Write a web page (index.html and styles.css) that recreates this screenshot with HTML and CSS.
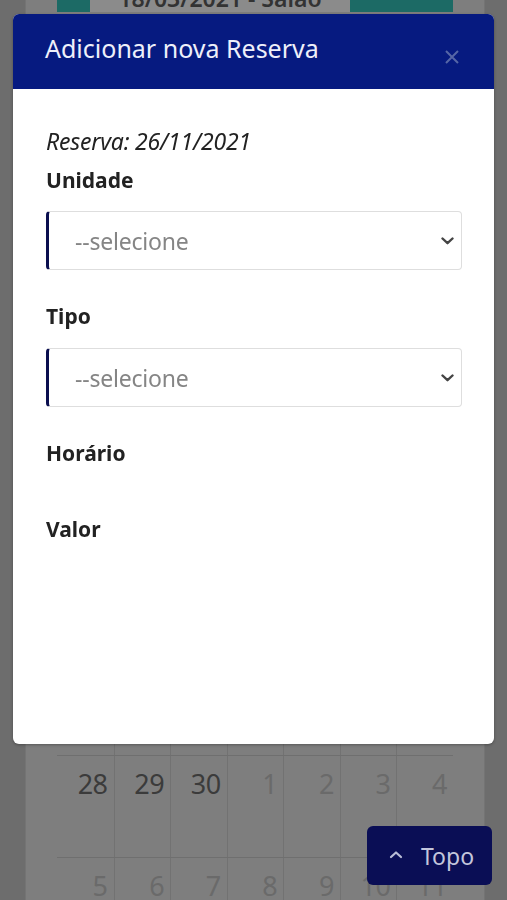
FILE: index.html
```html
<!DOCTYPE html>
<html lang="pt-BR">
<head>
<meta charset="utf-8">
<title>Reservas</title>
<link rel="stylesheet" href="styles.css">
</head>
<body>
<div class="page">
  <div class="cal">
    <div class="events">
      <div class="ev teal"></div>
      <div class="ev label"><span>18/03/2021 - Salão</span></div>
      <div class="ev teal wide"></div>
    </div>
    <div class="weeks">
      <div class="week"><span></span><span></span><span></span><span></span><span></span><span></span><span></span></div>
      <div class="week"><span></span><span></span><span></span><span></span><span></span><span></span><span></span></div>
      <div class="week"><span></span><span></span><span></span><span></span><span></span><span></span><span></span></div>
      <div class="week"><span></span><span></span><span></span><span></span><span></span><span></span><span></span></div>
      <div class="week"><span></span><span></span><span></span><span></span><span></span><span></span><span></span></div>
      <div class="week"><span></span><span></span><span></span><span></span><span></span><span></span><span></span></div>
      <div class="week"><span></span><span></span><span></span><span></span><span></span><span></span><span></span></div>
      <div class="week"><span>28</span><span>29</span><span>30</span><span class="off">1</span><span class="off">2</span><span class="off">3</span><span class="off">4</span></div>
      <div class="week"><span class="off">5</span><span class="off">6</span><span class="off">7</span><span class="off">8</span><span class="off">9</span><span class="off">10</span><span class="off">11</span></div>
    </div>
  </div>
</div>

<div class="modal">
  <div class="modal-head">
    <h2>Adicionar nova Reserva</h2>
    <svg class="close" width="14" height="14" viewBox="0 0 14 14"><path d="M1 1 L13 13 M13 1 L1 13" stroke="#5666a6" stroke-width="2" fill="none"/></svg>
  </div>
  <div class="modal-body">
    <p class="date">Reserva: 26/11/2021</p>
    <div class="group">
      <label>Unidade</label>
      <div class="select"><span>--selecione</span>
        <svg width="13" height="8" viewBox="0 0 13 8"><path d="M1.5 1.5 L6.5 6.2 L11.5 1.5" stroke="#444" stroke-width="2.4" fill="none" stroke-linecap="round" stroke-linejoin="round"/></svg>
      </div>
    </div>
    <div class="group">
      <label>Tipo</label>
      <div class="select"><span>--selecione</span>
        <svg width="13" height="8" viewBox="0 0 13 8"><path d="M1.5 1.5 L6.5 6.2 L11.5 1.5" stroke="#444" stroke-width="2.4" fill="none" stroke-linecap="round" stroke-linejoin="round"/></svg>
      </div>
    </div>
    <div class="group tall">
      <label>Horário</label>
    </div>
    <div class="group">
      <label>Valor</label>
    </div>
  </div>
</div>

<button class="topo">
  <svg width="14" height="9" viewBox="0 0 14 9"><path d="M2 7 L7 2.5 L12 7" stroke="#b9bdd6" stroke-width="2.2" fill="none" stroke-linecap="round" stroke-linejoin="round"/></svg>
  <span>Topo</span>
</button>
</body>
</html>
```
FILE: styles.css
```css
* { box-sizing: border-box; }
html, body { margin: 0; padding: 0; }
body {
  background: #6d6d6d;
  font-family: "Noto Sans", "Open Sans", sans-serif;
  height: 900px;
  overflow: hidden;
}
.page {
  padding: 0 22px 0 25px;
  height: 900px;
}
.cal {
  background: #7e7e7e;
  border-left: 1px solid #747474;
  border-right: 1px solid #747474;
  height: 900px;
  padding: 0 31px 0 31px;
}
.events {
  display: flex;
  height: 12px;
  margin-bottom: 29px;
}
.ev { height: 12px; overflow: hidden; }
.ev.teal { background: #1c6a65; width: 33px; }
.ev.teal.wide { width: 103px; }
.ev.label {
  background: #8b8b8b;
  width: 260px;
  display: flex;
  justify-content: center;
}
.ev.label span {
  display: block;
  margin-top: -14px;
  line-height: 24px;
  font-size: 23px;
  font-weight: 600;
  color: #333;
  white-space: nowrap;
}
.weeks { display: flex; flex-direction: column; }
.week {
  display: grid;
  grid-template-columns: repeat(7, 1fr);
  height: 102px;
  border-top: 1px solid #6f6f6f;
}
.week span {
  border-left: 1px solid #727272;
  text-align: right;
  padding: 10px 6px 0 0;
  font-size: 27px;
  line-height: 36px;
  color: #3b3b3b;
  letter-spacing: -0.5px;
}
.week span:first-child { border-left: none; }
.week span.off { color: #6a6a6a; }

.modal {
  position: fixed;
  left: 13px;
  top: 14px;
  width: 481px;
  height: 730px;
  background: #fff;
  border-radius: 6px;
  overflow: hidden;
  box-shadow: 0 1px 3px rgba(0,0,0,0.3);
}
.modal-head {
  background: #061a80;
  height: 75px;
  display: flex;
  align-items: center;
  justify-content: space-between;
  padding: 0 35px 0 32px;
}
.modal-head h2 {
  margin: 0;
  color: #eef0fa;
  font-weight: 400;
  font-size: 25px;
  letter-spacing: 0;
  margin-top: -8px;
}
.close { margin-top: 10px; }
.modal-body {
  padding: 38px 32px 0 33px;
}
.date {
  margin: 0 0 11px;
  font-style: italic;
  font-size: 23px;
  line-height: 28px;
  color: #222;
  letter-spacing: -0.2px;
}
.group { margin-bottom: 32px; }
.group.tall { margin-bottom: 48px; }
.group label {
  display: block;
  font-weight: 700;
  font-size: 21px;
  line-height: 28px;
  color: #222;
  margin-bottom: 18px;
}
.group:first-of-type label { margin-bottom: 17px; }
.select {
  height: 59px;
  width: 416px;
  border: 1px solid #dedede;
  border-left: 3px solid #0b0f4f;
  border-radius: 4px;
  display: flex;
  align-items: center;
  justify-content: space-between;
  padding: 0 7px 0 26px;
  font-size: 23px;
  color: #858585;
}
.select span { letter-spacing: -0.2px; }

.topo {
  position: fixed;
  right: 15px;
  bottom: 15px;
  width: 125px;
  height: 59px;
  background: #0a0e55;
  border: none;
  border-radius: 6px;
  display: flex;
  align-items: center;
  justify-content: center;
  gap: 18px;
  padding: 0 0 0 4px;
  font-family: "Noto Sans", "Open Sans", sans-serif;
  font-size: 23px;
  color: #c3c6dc;
}
.topo svg { margin-top: -2px; }
```
